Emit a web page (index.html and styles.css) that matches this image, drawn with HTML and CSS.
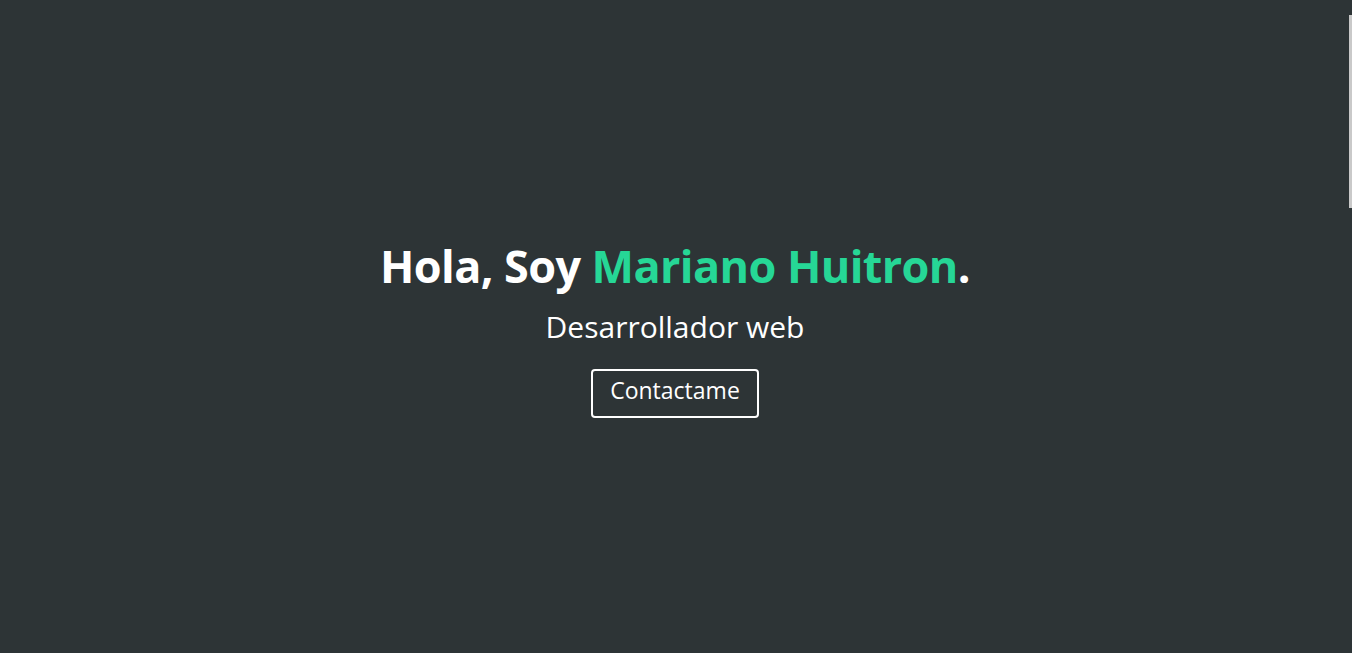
FILE: index.html
```html
<!DOCTYPE html>
<html lang="es">
<head>
<meta charset="utf-8">
<title>Mariano Huitron</title>
<link rel="stylesheet" href="styles.css">
</head>
<body>
<header class="hero">
  <h1 class="hero-title">Hola, Soy <span class="accent">Mariano Huitron</span>.</h1>
  <p class="hero-subtitle">Desarrollador web</p>
  <a class="hero-button" href="#contacto">Contactame</a>
</header>
<div class="scroll-thumb" aria-hidden="true"></div>
</body>
</html>
```
FILE: styles.css
```css
html, body {
  margin: 0;
  padding: 0;
  background: #2d3436;
}
body {
  font-family: "Open Sans", "Lato", sans-serif;
  color: #ffffff;
}
.hero {
  box-sizing: border-box;
  height: 653px;
  padding-top: 3px;
  padding-right: 2px;
  display: flex;
  flex-direction: column;
  align-items: center;
  justify-content: center;
  text-align: center;
}
.hero-title {
  margin: 0;
  font-size: 45px;
  font-weight: 700;
  line-height: 54px;
  letter-spacing: -0.6px;
}
.accent {
  color: #26d796;
}
.hero-subtitle {
  margin: 14px 0 22px;
  font-size: 30px;
  line-height: 40px;
}
.hero-button {
  display: inline-block;
  padding: 5px 17px 12px;
  border: 2px solid #ffffff;
  border-radius: 4px;
  color: #ffffff;
  text-decoration: none;
  font-size: 23px;
  line-height: 28px;
}
.scroll-thumb {
  position: fixed;
  top: 15px;
  right: 0;
  width: 3px;
  height: 193px;
  background: #c9c9c9;
}
```
